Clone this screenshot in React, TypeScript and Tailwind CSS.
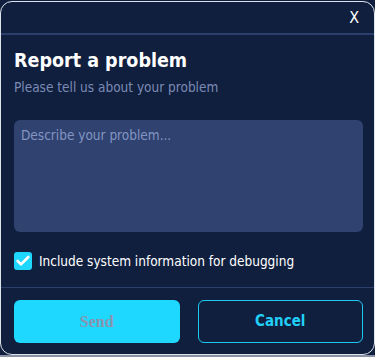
import { Check } from "lucide-react";

const App = () => {
  return (
    <div
      className="w-[375px] h-[357px] bg-[#111f3f] flex flex-col overflow-hidden"
      style={{ fontFamily: '"DejaVu Sans Condensed", "DejaVu Sans", sans-serif' }}
    >
      <div className="h-[354px] mt-[1px] rounded-[12px] border border-[#dfe3ea] bg-[#111f3f] flex flex-col overflow-hidden">
        <div className="h-[33px] shrink-0 border-b-2 border-[#2c3e6b] flex items-center justify-end pr-[15px]">
          <span className="text-[16px] text-white leading-none">X</span>
        </div>

        <div className="pl-[13px] pr-[11px] pt-[13px]">
          <h2 className="text-[19.5px] font-bold text-white leading-[26px]">Report a problem</h2>
          <p className="mt-[4px] text-[13.5px] text-[#7b8bb5] leading-[18px]">
            Please tell us about your problem
          </p>

          <textarea
            placeholder="Describe your problem..."
            className="mt-[24px] block w-full h-[112px] resize-none rounded-[6px] bg-[#2f4270] px-[7px] py-[5px] text-[13.5px] text-white placeholder:text-[#8395c2] outline-none"
          />

          <label className="mt-[20px] flex items-center gap-[7px]">
            <span className="w-[18px] h-[18px] rounded-[3px] bg-[#1fd6fd] flex items-center justify-center">
              <Check className="w-[16px] h-[16px] text-white" strokeWidth={4} />
            </span>
            <span className="text-[13.5px] text-white leading-[18px]">
              Include system information for debugging
            </span>
          </label>
        </div>

        <div className="mt-[17px] border-t border-[#2c3e6b] pt-[12px] pl-[13px] pr-[11px] grid grid-cols-2 gap-[18px]">
          <button
            className="h-[43px] rounded-[6px] bg-[#1fd8ff] text-[16px] font-bold text-[#8894b0]"
            style={{ fontFamily: '"Liberation Serif", serif' }}
          >
            Send
          </button>
          <button className="h-[43px] rounded-[6px] border border-[#1fc8ee] text-[15px] font-bold text-[#20d0f8]">
            Cancel
          </button>
        </div>
      </div>
      <div className="flex-1 bg-[#8a93a6]" />
    </div>
  );
};

export default App;
